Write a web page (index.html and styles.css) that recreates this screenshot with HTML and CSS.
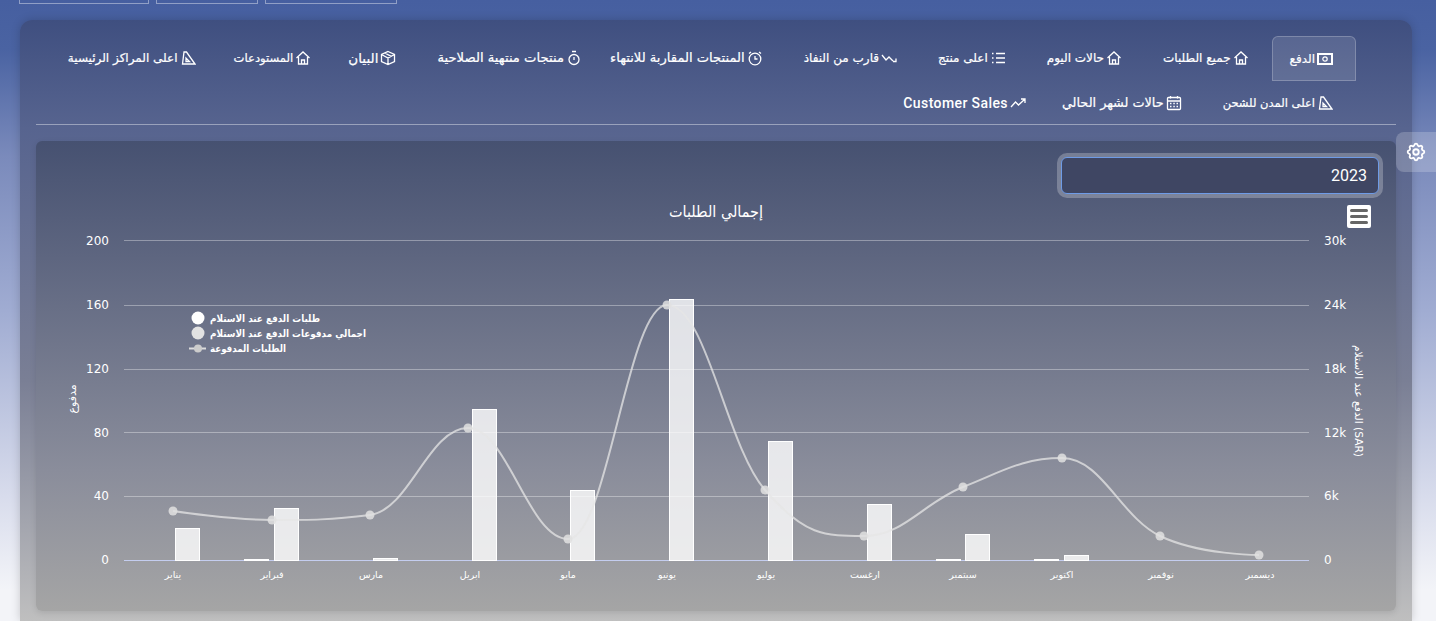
FILE: index.html
```html
<!DOCTYPE html>
<html lang="ar" dir="rtl">
<head>
<meta charset="utf-8">
<title>الدفع</title>
<link rel="stylesheet" href="styles.css">
</head>
<body>
<div class="topbar">
  <span class="topbtn w1"></span><span class="topbtn w2"></span><span class="topbtn w3"></span>
</div>
<aside class="settings">
  <svg viewBox="0 0 24 24" width="22" height="22" fill="none" stroke="#fff" stroke-width="2" stroke-linecap="round" stroke-linejoin="round"><path d="M10.3 4.3c.4-1.8 3-1.8 3.4 0a1.7 1.7 0 0 0 2.6 1.1c1.5-.9 3.3.8 2.4 2.4a1.7 1.7 0 0 0 1 2.5c1.8.4 1.8 3 0 3.4a1.7 1.7 0 0 0-1 2.6c.9 1.5-.9 3.3-2.4 2.4a1.7 1.7 0 0 0-2.6 1c-.4 1.8-3 1.8-3.4 0a1.7 1.7 0 0 0-2.6-1c-1.5.9-3.3-.9-2.4-2.4a1.7 1.7 0 0 0-1-2.6c-1.8-.4-1.8-3 0-3.4a1.7 1.7 0 0 0 1-2.5c-.9-1.6.9-3.3 2.4-2.4a1.7 1.7 0 0 0 2.6-1.1z"/><circle cx="12" cy="12" r="3"/></svg>
</aside>
<main class="panel">
  <nav class="tabs">
    <a class="tab active"><svg class="ico" viewBox="0 0 16 16"><rect x="1" y="3" width="14" height="10" fill="none" stroke="#fff" stroke-width="2"/><circle cx="8" cy="8" r="2.2" fill="none" stroke="#fff" stroke-width="1.2"/></svg>الدفع</a>
    <a class="tab"><svg class="ico" viewBox="0 0 16 16"><path d="M1.500 8 8 2l6.500 6M3.500 7v7h9V7M6.500 14v-4h3v4"/></svg>جميع الطلبات</a>
    <a class="tab"><svg class="ico" viewBox="0 0 16 16"><path d="M1.500 8 8 2l6.500 6M3.500 7v7h9V7M6.500 14v-4h3v4"/></svg>حالات اليوم</a>
    <a class="tab"><svg class="ico" viewBox="0 0 16 16"><path d="M6 3.500h9M6 8h9M6 12.500h9M2 3.500h1.500M2 8h1.500M2 12.500h1.500"/></svg>اعلى منتج</a>
    <a class="tab"><svg class="ico" viewBox="0 0 16 16"><path d="M1 5l4 5 3-3 4 4M15 8.500v3h-3"/></svg>قارب من النفاذ</a>
    <a class="tab expiring"><svg class="ico" viewBox="0 0 16 16"><circle cx="8" cy="9" r="5.800"/><path d="M8 6v3h2.500M2 3.500 4 2M14 3.500 12 2"/></svg>المنتجات المقاربة للانتهاء</a>
    <a class="tab expired"><svg class="ico" viewBox="0 0 16 16"><circle cx="8" cy="9.500" r="5"/><path d="M6 1.500h4M8 7v3"/></svg>منتجات منتهية الصلاحية</a>
    <a class="tab stmt"><svg class="ico" viewBox="0 0 16 16"><path d="M8 1.500 14.500 4.500v7L8 14.500 1.500 11.500v-7zM1.500 4.500 8 8l6.500-3.500M8 8v6.500M4.700 3 11.300 6.300"/></svg>البيان</a>
    <a class="tab stores"><svg class="ico" viewBox="0 0 16 16"><path d="M1.500 8 8 2l6.500 6M3.500 7v7h9V7M6.500 14v-4h3v4"/></svg>المستودعات</a>
    <a class="tab"><svg class="ico" viewBox="0 0 16 16"><path d="M4 2h2.500L15 14H2.500zM6 8v3.500h3.500z"/></svg>اعلى المراكز الرئيسية</a>
    <a class="tab cities"><svg class="ico" viewBox="0 0 16 16"><path d="M4 2h2.500L15 14H2.500zM6 8v3.500h3.500z"/></svg>اعلى المدن للشحن</a>
    <a class="tab month"><svg class="ico" viewBox="0 0 16 16"><rect x="1.500" y="2.500" width="13" height="12" rx="1"/><path d="M1.500 6h13M4.500 1v2.500M11.500 1v2.500M4 8.500h1.500M7.300 8.500h1.500M10.500 8.500H12M4 11.500h1.500M7.300 11.500h1.500M10.500 11.500H12"/></svg>حالات لشهر الحالي</a>
    <a class="tab latin"><svg class="ico" viewBox="0 0 16 16"><path d="M1 12l4.500-5 3 3L15 4M11 4h4v4"/></svg>Customer Sales</a>
  </nav>
  <hr class="rule">
  <section class="card">
    <div class="filter"><div class="select">2023</div></div>
    <div class="chart">
      <svg class="plot" viewBox="36 196 1360 415" width="1360" height="415">
        <text class="title" x="716" y="217" text-anchor="middle" textLength="94" lengthAdjust="spacingAndGlyphs">إجمالي الطلبات</text>
        <g class="grid">
          <path d="M124 240.500H1309M124 305.500H1309M124 369.500H1309M124 432.500H1309M124 496.500H1309"/>
        </g>
        <path class="base" d="M124 560.500H1309"/>
        <g class="ytick" text-anchor="end">
          <text x="109" y="245">200</text><text x="109" y="309">160</text><text x="109" y="373">120</text><text x="109" y="437">80</text><text x="109" y="500">40</text><text x="109" y="564">0</text>
        </g>
        <g class="ytick" text-anchor="start">
          <text x="1324" y="245">30k</text><text x="1324" y="309">24k</text><text x="1324" y="373">18k</text><text x="1324" y="437">12k</text><text x="1324" y="500">6k</text><text x="1324" y="564">0</text>
        </g>
        <text class="axt" transform="translate(76 399) rotate(-90)" text-anchor="middle">مدفوع</text>
        <text class="axt rtl" transform="translate(1355 401) rotate(90)" text-anchor="middle" textLength="112" lengthAdjust="spacingAndGlyphs">(SAR) الدفع عند الاستلام</text>
        <g class="bars">
          <rect x="175.500" y="528.500" width="24" height="32"/>
          <rect x="244.500" y="559.500" width="24" height="1"/>
          <rect x="274.500" y="508.500" width="24" height="52"/>
          <rect x="373.500" y="558.500" width="24" height="2"/>
          <rect x="472.500" y="409.500" width="24" height="151"/>
          <rect x="570.500" y="490.500" width="24" height="70"/>
          <rect x="669.500" y="299.500" width="24" height="261"/>
          <rect x="768.500" y="441.500" width="24" height="119"/>
          <rect x="867.500" y="504.500" width="24" height="56"/>
          <rect x="936.500" y="559.500" width="24" height="1"/>
          <rect x="965.500" y="534.500" width="24" height="26"/>
          <rect x="1034.500" y="559.500" width="24" height="1"/>
          <rect x="1064.500" y="555.500" width="24" height="5"/>
        </g>
        <path class="curve" d="M173 511C173 511 232.500 520 272 520C311.500 520 330.500 520 370 515C409.500 510 428.500 428 468 428C507.500 428 528.500 539 568 539C607.500 539 627.500 305 667 305C706.500 305 725.500 444 765 490C804.500 536 824.500 536 864 536C903.500 536 923.500 502.600 963 487C1002.500 471.400 1022.500 458 1062 458C1101.500 458 1120.500 517 1160 536C1199.500 555 1259 555 1259 555"/>
        <g class="dots">
          <circle cx="173" cy="511" r="4.500"/><circle cx="272" cy="520" r="4.500"/><circle cx="370" cy="515" r="4.500"/><circle cx="468" cy="428" r="4.500"/><circle cx="568" cy="539" r="4.500"/><circle cx="667" cy="305" r="4.500"/><circle cx="765" cy="490" r="4.500"/><circle cx="864" cy="536" r="4.500"/><circle cx="963" cy="487" r="4.500"/><circle cx="1062" cy="458" r="4.500"/><circle cx="1160" cy="536" r="4.500"/><circle cx="1259" cy="555" r="4.500"/>
        </g>
        <g class="xtick" text-anchor="middle">
          <text x="173" y="578">يناير</text><text x="272" y="578">فبراير</text><text x="371" y="578">مارس</text><text x="470" y="578">ابريل</text><text x="568" y="578">مايو</text><text x="667" y="578">يونيو</text><text x="766" y="578">يوليو</text><text x="865" y="578">ارغست</text><text x="963" y="578">سبتمبر</text><text x="1062" y="578">اكتوبر</text><text x="1161" y="578">نوفمبر</text><text x="1260" y="578">ديسمبر</text>
        </g>
        <g class="legend">
          <circle cx="198" cy="318" r="6.500" class="l1"/>
          <text x="210" y="322" textLength="110" lengthAdjust="spacingAndGlyphs">طلبات الدفع عند الاستلام</text>
          <circle cx="198" cy="333" r="6.500" class="l2"/>
          <text x="210" y="337" textLength="156" lengthAdjust="spacingAndGlyphs">اجمالي مدفوعات الدفع عند الاستلام</text>
          <path class="l3" d="M189 348.500H206"/><circle cx="198" cy="348.500" r="4" class="l4"/>
          <text x="210" y="352" textLength="76" lengthAdjust="spacingAndGlyphs">الطلبات المدفوعة</text>
        </g>
      </svg>
      <button class="menu" aria-label="menu"><span></span><span></span><span></span></button>
    </div>
  </section>
</main>
</body>
</html>
```
FILE: styles.css
```css
* { box-sizing: border-box; }
html, body { margin: 0; height: 621px; overflow: hidden; }
body {
  position: relative;
  padding: 0 24px 0 20px;
  background: linear-gradient(180deg, #465fa0 0%, #4a63a2 8%, #7a8abb 25%, #a0acd2 50%, #d8dcec 80%, #f3f4f8 95%);
  font-family: "DejaVu Sans", "Noto Sans", sans-serif;
  color: #fff;
}
.topbar { display: flex; direction: ltr; height: 20px; gap: 7px; margin-left: -1px; }
.topbtn { display: block; height: 4px; border: 1px solid rgba(255,255,255,.4); border-top: 0; }
.w1 { width: 130px; }
.w2 { width: 102px; }
.w3 { width: 132px; }
.settings {
  position: absolute; right: 0; top: 132px; width: 40px; height: 40px;
  display: flex; align-items: center; justify-content: center;
  background: rgba(255,255,255,.2);
  border-radius: 8px 0 0 8px;
}
.panel {
  width: 1392px;
  height: 601px;
  padding: 16px 16px 0;
  border-radius: 12px 12px 0 0;
  background: linear-gradient(180deg, #3f4f80 0%, #57648f 18%, #7a7f95 60%, #bfbfbf 100%);
  box-shadow: 0 0 10px rgba(0,0,0,.18);
}
.tabs { display: flex; flex-wrap: wrap; align-items: flex-start; padding-right: 40px; }
.tab {
  display: flex; align-items: center; gap: 2px;
  height: 43px;
  padding: 0 22px 0 17px;
  font-size: 12px;
  white-space: nowrap;
  -webkit-text-stroke: .2px #fff;
  border: 1px solid transparent;
  border-radius: 6px 6px 0 0;
}
.tab.active { background: rgba(255,255,255,.12); border-color: rgba(255,255,255,.22); height: 45px; }
.tab.expiring { font-size: 13.100px; padding-left: 4px; }
.tab.expired { font-size: 13.200px; }
.tab.stmt { font-size: 13.500px; padding-left: 13px; }
.tab.stores { font-size: 11.600px; padding-left: 14px; }
.tab.cities { font-size: 11.500px; }
.tab.month { font-size: 12.800px; padding-left: 12px; }
.latin { font-family: Roboto, sans-serif; font-size: 14px; letter-spacing: .4px; -webkit-text-stroke: 0; font-weight: 500; }
.ico { width: 16px; height: 16px; fill: none; stroke: #fff; stroke-width: 1.300; flex: none; }
.rule { margin: 0; border: 0; border-top: 1px solid rgba(255,255,255,.4); }
.card {
  margin-top: 16px;
  height: 470px;
  border-radius: 6px;
  background: linear-gradient(180deg, #465171 0%, #5e6680 25%, #8a8d9b 70%, #a5a5a5 100%);
  padding-top: 16px;
  box-shadow: 0 2px 6px rgba(0,0,0,.1);
}
.filter { padding: 0 17px; height: 39px; }
.select {
  width: 318px; height: 37px;
  font: 400 16px/35px Roboto, sans-serif;
  padding: 0 11px;
  background: #3f4663;
  border: 1px solid #6e9be6;
  border-radius: 6px;
  box-shadow: 0 0 0 4px rgba(255,255,255,.25);
}
.chart { position: relative; }
.plot { display: block; direction: ltr; }
.menu {
  position: absolute; top: 9px; right: 25px; width: 24px; height: 23px;
  padding: 4px 3px; border: 0; border-radius: 2px; background: #fff;
  display: flex; flex-direction: column; justify-content: space-between;
}
.menu span { display: block; height: 3px; border-radius: 2px; background: #666; }
.title { font-size: 16px; font-weight: 500; fill: #fff; font-family: "DejaVu Sans", sans-serif; }
.grid path { stroke: rgba(255,255,255,.35); fill: none; }
.base { stroke: #c4cdef; fill: none; }
.ytick text { font: 12px "DejaVu Sans", sans-serif; fill: #fff; }
.axt { font: 11px "DejaVu Sans", sans-serif; fill: #fff; }
.rtl { direction: rtl; }
.xtick text { font: 9.500px "DejaVu Sans", sans-serif; fill: #fff; }
.bars rect { fill: rgba(255,255,255,.8); stroke: #fff; }
.curve { fill: none; stroke: rgba(230,230,230,.75); stroke-width: 2; }
.dots circle { fill: rgba(225,225,225,.85); }
.legend text { font: bold 10px "DejaVu Sans", sans-serif; fill: #fff; }
.l1 { fill: #fff; }
.l2 { fill: #e2e2e2; }
.l3 { stroke: #ddd; stroke-width: 2; fill: none; }
.l4 { fill: #ccc; }
```
